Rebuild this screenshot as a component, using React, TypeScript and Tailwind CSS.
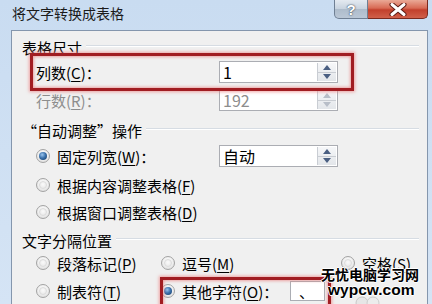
import React from "react";

const FONT = { fontFamily: '"Noto Sans CJK SC", "Noto Sans", sans-serif' };

function Radio({ checked }: { checked?: boolean }) {
  return (
    <span className="w-[14px] h-[14px] shrink-0 rounded-full border border-[#a3a3a3] bg-[radial-gradient(circle_at_50%_40%,#ffffff_0%,#f2f2f2_45%,#d4d4d4_100%)] flex items-center justify-center">
      {checked ? (
        <span className="w-[8px] h-[8px] rounded-full bg-[radial-gradient(circle_at_40%_35%,#9cc6ee_0%,#3c73ad_45%,#10345f_100%)]" />
      ) : (
        <span className="w-[8px] h-[8px] rounded-full bg-[radial-gradient(circle_at_50%_40%,#fafafa_0%,#e6e6e6_100%)] border border-[#dcdcdc]" />
      )}
    </span>
  );
}

function U({ c }: { c: string }) {
  return <span className="underline underline-offset-2">{c}</span>;
}

function Spin({ disabled }: { disabled?: boolean }) {
  const col = disabled ? "#b8bec8" : "#4a5f82";
  return (
    <div className="w-[19px] h-full flex flex-col border-l border-[#c9cdd3] bg-[linear-gradient(#f6f7f9,#e3e6ea)]">
      <div className="flex-1 flex items-center justify-center border-b border-[#c9cdd3]">
        <svg width="8" height="5" viewBox="0 0 8 5"><path d="M0 5 L4 0 L8 5 Z" fill={col} /></svg>
      </div>
      <div className="flex-1 flex items-center justify-center">
        <svg width="8" height="5" viewBox="0 0 8 5"><path d="M0 0 L4 5 L8 0 Z" fill={col} /></svg>
      </div>
    </div>
  );
}

function SpinInput({ value, disabled }: { value: string; disabled?: boolean }) {
  return (
    <div className="w-[119px] h-[22px] flex border border-[#abadb3] bg-white p-[1px]">
      <div className={`flex-1 flex items-center pl-[2px] text-[16px] leading-none ${disabled ? "text-[#8d8d8d]" : "text-black"}`}>{value}</div>
      <Spin disabled={disabled} />
    </div>
  );
}

function Header({ label }: { label: React.ReactNode }) {
  return (
    <div className="h-[18px] flex items-center">
      <span className="text-[15px] leading-none text-black whitespace-nowrap">{label}</span>
      <div className="flex-1 ml-[4px] mr-[8px] -mt-[3px] border-t border-[#d6dce3] border-b border-b-white" />
    </div>
  );
}

export default function App() {
  return (
    <div className="w-[432px] h-[304px] relative overflow-hidden bg-[linear-gradient(#c9dcf1,#d5e4f5)]" style={FONT}>
      {/* title bar */}
      <div className="h-[30px] flex items-start">
        <div className="h-[27px] flex items-center pl-[12px] text-[14px] text-[#1b1b1b]">将文字转换成表格</div>
        <div className="ml-auto mr-[4px] flex">
          <div className="w-[34px] h-[19px] rounded-bl-[5px] border border-t-0 border-[#6f7f93] bg-[linear-gradient(#e4eaf1_0%,#c7d2de_50%,#aebccb_51%,#bac7d6_100%)] flex items-center justify-center">
            <span className="text-[15px] font-bold leading-none text-white [text-shadow:0_0_2px_#3d4b5d,0_0_1px_#3d4b5d]" style={{ fontFamily: '"Liberation Sans", sans-serif' }}>?</span>
          </div>
          <div className="w-[60px] h-[19px] rounded-br-[5px] border border-t-0 border-l-0 border-[#7a2a1f] bg-[linear-gradient(#eaa996_0%,#d86a54_45%,#c2402c_55%,#d0604a_100%)] flex items-center justify-center">
            <svg width="18" height="13" viewBox="0 0 18 13">
              <path d="M3 1.5 L15 11.5 M15 1.5 L3 11.5" stroke="#5a1a12" strokeWidth="5" strokeLinecap="round" />
              <path d="M3 1.5 L15 11.5 M15 1.5 L3 11.5" stroke="#ffffff" strokeWidth="3" strokeLinecap="round" />
            </svg>
          </div>
        </div>
      </div>

      {/* body */}
      <div className="flex h-[274px]">
        <div className="w-[11px] shrink-0" />
        <div className="flex-1 bg-[#f0f0f0] border-l border-t border-r border-[#8496ad] pl-[10px] flex flex-col">
          <div className="mt-[7px]">
            <Header label="表格尺寸" />
          </div>

          <div className="mt-[5px] h-[22px] flex items-center ml-[14px]">
            <span className="w-[183px] text-[15px] leading-none">列数(<U c="C" />)：</span>
            <SpinInput value="1" />
          </div>

          <div className="mt-[6px] h-[22px] flex items-center ml-[14px]">
            <span className="w-[183px] text-[15px] leading-none text-[#8d8d8d]">行数(<U c="R" />)：</span>
            <SpinInput value="192" disabled />
          </div>

          <div className="mt-[10px]">
            <Header label="“自动调整”操作" />
          </div>

          <div className="mt-[6px] h-[22px] flex items-center ml-[14px]">
            <div className="w-[183px] flex items-center gap-[7px]">
              <Radio checked />
              <span className="text-[15px] leading-none">固定列宽(<U c="W" />)：</span>
            </div>
            <SpinInput value="自动" />
          </div>

          <div className="mt-[9px] h-[18px] flex items-center gap-[7px] ml-[14px]">
            <Radio />
            <span className="text-[15px] leading-none">根据内容调整表格(<U c="F" />)</span>
          </div>

          <div className="mt-[9px] h-[18px] flex items-center gap-[7px] ml-[14px]">
            <Radio />
            <span className="text-[15px] leading-none">根据窗口调整表格(<U c="D" />)</span>
          </div>

          <div className="mt-[10px]">
            <Header label="文字分隔位置" />
          </div>

          <div className="mt-[5px] h-[18px] flex items-center ml-[14px]">
            <div className="w-[125px] flex items-center gap-[7px]">
              <Radio />
              <span className="text-[15px] leading-none">段落标记(<U c="P" />)</span>
            </div>
            <div className="w-[180px] flex items-center gap-[7px]">
              <Radio />
              <span className="text-[15px] leading-none">逗号(<U c="M" />)</span>
            </div>
            <div className="flex items-center gap-[7px]">
              <Radio />
              <span className="text-[15px] leading-none">空格(<U c="S" />)</span>
            </div>
          </div>

          <div className="mt-[9px] h-[20px] flex items-center ml-[14px]">
            <div className="w-[125px] flex items-center gap-[7px]">
              <Radio />
              <span className="text-[15px] leading-none">制表符(<U c="T" />)</span>
            </div>
            <div className="w-[129px] flex items-center gap-[7px]">
              <Radio checked />
              <span className="text-[15px] leading-none">其他字符(<U c="O" />)：</span>
            </div>
            <div className="w-[35px] h-[20px] border border-[#abadb3] bg-white flex items-center pl-[8px] text-[15px] leading-none">、</div>
          </div>
        </div>
        <div className="w-[4px] shrink-0" />
      </div>

      {/* red annotation boxes */}
      <div className="absolute left-[30px] top-[53px] w-[324px] h-[38px] border-[3px] border-[#a11d22] shadow-[0_0_3px_1px_rgba(235,130,130,0.7),inset_0_0_3px_1px_rgba(235,130,130,0.7)]" />
      <div className="absolute left-[160px] top-[277px] w-[171px] h-[40px] border-[3px] border-[#a11d22] shadow-[0_0_3px_1px_rgba(235,130,130,0.7),inset_0_0_3px_1px_rgba(235,130,130,0.7)]" />

      {/* watermark */}
      <div className="absolute left-[321px] top-[266px] flex flex-col items-start">
        <span className="text-[14px] font-bold leading-[17px] text-black [text-shadow:1px_0_0_#fff,-1px_0_0_#fff,0_1px_0_#fff,0_-1px_0_#fff]">无忧电脑学习网</span>
        <span className="ml-[7px] text-[15.5px] font-bold leading-[14px] text-black [text-shadow:1px_0_0_#fff,-1px_0_0_#fff,0_1px_0_#fff,0_-1px_0_#fff]" style={{ fontFamily: '"Liberation Sans", sans-serif' }}>wypcw.com</span>
      </div>
      <svg className="absolute left-[354px] top-[294px]" width="28" height="12" viewBox="0 0 28 12">
        <circle cx="8" cy="9" r="6" fill="#e6e6e6" stroke="#c8c8c8" />
        <circle cx="19" cy="9" r="6" fill="#ececec" stroke="#cdcdcd" />
      </svg>
    </div>
  );
}
